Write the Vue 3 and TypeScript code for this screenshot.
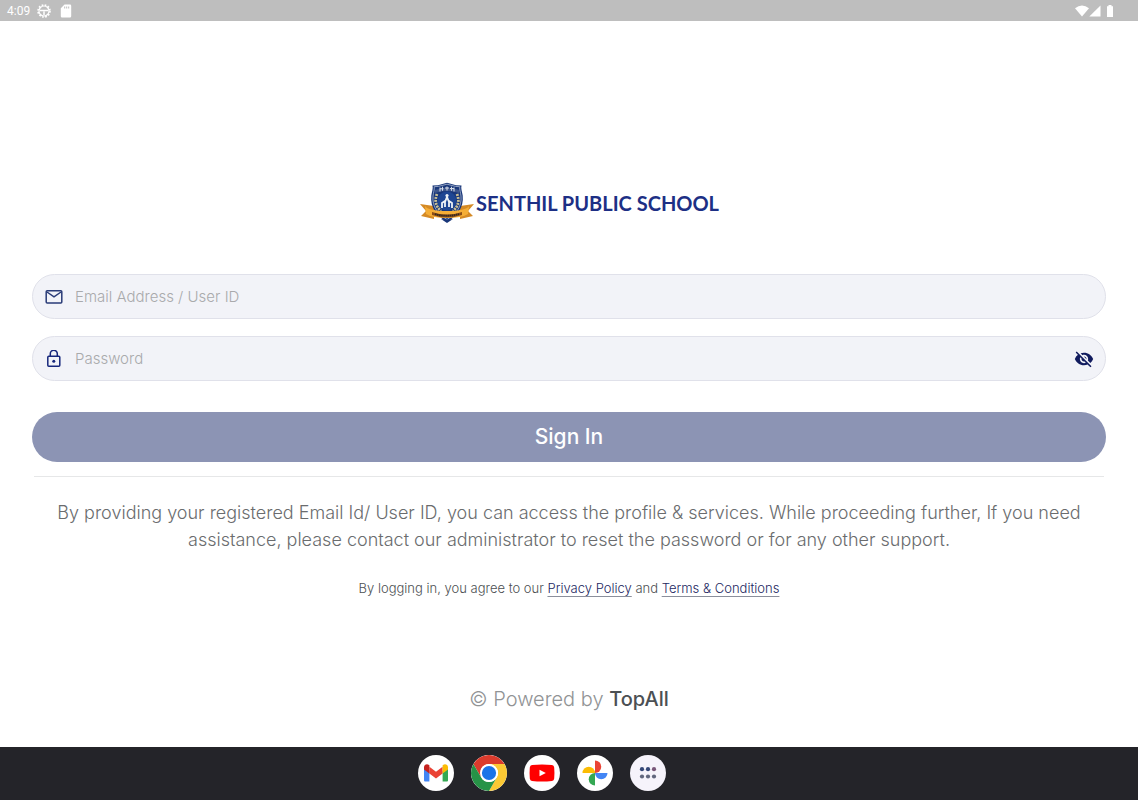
<script setup lang="ts">
import { computed, ref } from 'vue'

const userId = ref('')
const password = ref('')
const showPassword = ref(false)
const passwordType = computed(() => (showPassword.value ? 'text' : 'password'))
</script>

<template>
  <div class="screen">
    <header class="status-bar">
      <div class="status-left">
        <span class="clock">4:09</span>
        <svg width="14" height="14" viewBox="0 0 14 14" fill="none" stroke="#fff">
          <circle cx="7" cy="7" r="6" stroke-width="1.6" stroke-dasharray="1.7 1.44" />
          <circle cx="7" cy="7" r="5" stroke-width="1.2" />
          <path d="M3 6.500h8M7 7.500v3.500" stroke-width="1.500" />
        </svg>
        <svg class="sd-card" width="12" height="14" viewBox="0 0 12 14">
          <path d="M4.500.5H10a1.200 1.200 0 0 1 1.200 1.200v10.600A1.200 1.200 0 0 1 10 13.500H2A1.200 1.200 0 0 1 .8 12.300V4.200z" fill="#fff" />
          <path d="M4.700 2.500v2M6.700 2.500v2M8.700 2.500v2" stroke="#bebebe" />
        </svg>
      </div>
      <div class="status-right">
        <svg width="14" height="12" viewBox="0 0 14 12" fill="#fff"><path d="M0 3.200Q7-2.400 14 3.200L7 11.500z" /></svg>
        <svg width="12" height="12" viewBox="0 0 12 12" fill="#fff"><path d="M11.500.5v11H.3z" /></svg>
        <svg class="battery" width="8" height="12" viewBox="0 0 8 12" fill="#fff"><path d="M2.500 0h3v1.200H7V12H1V1.200h1.500z" /></svg>
      </div>
    </header>

    <main class="content">
      <h1 class="brand">
        <svg width="56" height="42" viewBox="0 0 56 42" aria-hidden="true">
          <path d="M1 22 15 24v13L2 34l5-5zM55 22 41 24v13l13-3-5-5z" fill="#d58a25" />
          <path d="M28 .8 37 3.200l5.500.3c-.8 3 .6 6 1.200 10C45 26 38 34 28 40 18 34 11 26 12.300 13.500c.6-4 2-7 1.200-10l5.500-.3z" fill="#183679" />
          <path d="M28 2.200 36.500 4.400l4.300.3c-.4 3 .8 6 1.200 9.300C43 25 37 32 28 37.500 19 32 13 25 14 14c.4-3.300 1.600-6.300 1.200-9.300l4.300-.3z" fill="none" stroke="#aebbd3" stroke-width=".8" />
          <path d="M16 8q12-5 24 0v3q-12-4-24 0z" fill="#3e568c" />
          <path d="M21 5.500v4M23.500 4.800v4M21.500 6.800h3M28 4.500v4M26 6h4M32.500 4.800v4M31 6.500h4.500M35 5.500v4" stroke="#d3dae6" stroke-width="1.100" />
          <path d="M18 12q-4 10 4 17M38 12q4 10-4 17" fill="none" stroke="#c9bf95" stroke-width="2.800" stroke-dasharray="2 1" />
          <circle cx="28" cy="19" r="9.500" fill="#1e4693" />
          <path d="M23 26v-5l3-2v6M33 26v-5l-3-2v6M26 20l2-5 2 5" fill="none" stroke="#eef2f6" stroke-width="1.800" />
          <circle cx="28" cy="13.500" r="1.600" fill="#eef2f6" />
          <path d="M6 24q3 5 22 5t22-5l-1 8q-6 4-21 4T7 32z" fill="#f5ae37" />
          <path d="M13 30q15 5 30 0v3q-15 5-30 0z" fill="#8b4e18" />
          <path d="M16 32q12 3.500 24 0" fill="none" stroke="#342920" stroke-width="1.800" stroke-dasharray="1.500 .6" />
          <path d="m22 37 6 4 6-4q-6 1-12 0z" fill="#183679" />
        </svg>
        <span>SENTHIL PUBLIC SCHOOL</span>
      </h1>

      <form class="login" @submit.prevent>
        <div class="field">
          <svg width="18" height="18" viewBox="0 0 18 18" fill="none" stroke="#293b77" stroke-width="1.500" aria-hidden="true">
            <rect x="1.200" y="2.700" width="15.600" height="12.300" rx="1" />
            <path d="m2 4 7 4.800L16 4" />
          </svg>
          <input v-model="userId" type="text" aria-label="Email Address / User ID" placeholder="Email Address / User ID" autocomplete="username">
        </div>
        <div class="field">
          <svg width="18" height="18" viewBox="0 0 18 18" fill="none" stroke="#16277c" stroke-width="1.500" aria-hidden="true">
            <rect x="2.800" y="6.300" width="12" height="10" rx="1" />
            <path d="M5.300 6V3.800a3.500 3.500 0 0 1 7 0V6" />
            <circle cx="8.800" cy="11.300" r="1.500" fill="#16277c" stroke="none" />
          </svg>
          <input v-model="password" :type="passwordType" aria-label="Password" placeholder="Password" autocomplete="current-password">
          <button class="reveal" type="button" aria-label="Show or hide password" @click="showPassword = !showPassword">
            <svg width="20" height="20" viewBox="0 0 24 24" fill="#111b5e">
              <path d="M12 7c2.760 0 5 2.240 5 5 0 .65-.13 1.260-.36 1.830l2.920 2.920c1.510-1.260 2.700-2.890 3.430-4.750-1.730-4.390-6-7.500-11-7.500-1.400 0-2.740.25-3.980.7l2.160 2.160C10.740 7.130 11.350 7 12 7zM2 4.270l2.280 2.280.46.46A11.800 11.800 0 0 0 1 12c1.730 4.390 6 7.500 11 7.500 1.550 0 3.030-.3 4.380-.84l.42.42L19.730 22 21 20.730 3.270 3zM7.530 9.800l1.550 1.550c-.05.21-.08.43-.08.65 0 1.660 1.340 3 3 3 .22 0 .44-.03.65-.08l1.550 1.550c-.67.33-1.410.53-2.200.53-2.760 0-5-2.240-5-5 0-.79.2-1.530.53-2.200zm4.310-.78 3.150 3.150.02-.16c0-1.660-1.340-3-3-3z" />
            </svg>
          </button>
        </div>
        <button class="sign-in" type="submit">Sign In</button>
      </form>

      <hr class="divider">
      <p class="help">By providing your registered Email Id/ User ID, you can access the profile &amp; services. While proceeding further, If you need assistance, please contact our administrator to reset the password or for any other support.</p>
      <p class="terms">By logging in, you agree to our <a href="#privacy">Privacy Policy</a> and <a href="#terms">Terms &amp; Conditions</a></p>
      <footer class="powered">© Powered by <strong>TopAll</strong></footer>
    </main>

    <nav class="dock" aria-label="Apps">
      <button type="button" aria-label="Gmail">
        <svg viewBox="0 0 36 36">
          <path d="M6 12v13.200c0 .8.600 1.300 1.300 1.300h4.100V16z" fill="#4285f4" />
          <path d="M24.600 16v10.500h4.100c.8 0 1.300-.6 1.300-1.300V12z" fill="#34a853" />
          <path d="m11.400 18.500 6.600 5 6.600-5v-6.700L18 16.800l-6.600-5z" fill="#ea4335" />
          <path d="M6 12.500c0-3 3-4 5-2.500l.4.300v8.200L6 14.500z" fill="#c5221f" />
          <path d="M30 12.500c0-3-3-4-5-2.500l-.4.300v8.200l5.400-4z" fill="#fbbc04" />
        </svg>
      </button>
      <button type="button" aria-label="Chrome">
        <svg viewBox="0 0 36 36">
          <path d="M2.400 9A18 18 0 0 1 33.600 9H18a9 9 0 0 0-7.800 4.500v9z" fill="#db3b2d" />
          <path d="M33.600 9A18 18 0 0 1 18 36l7.800-13.500A9 9 0 0 0 18 9z" fill="#fcc934" />
          <path d="M18 36A18 18 0 0 1 2.400 9l7.800 13.500A9 9 0 0 0 25.800 22.500z" fill="#279347" />
          <circle cx="18" cy="18" r="9" fill="#fff" />
          <circle cx="18" cy="18" r="7.100" fill="#1a73e8" />
        </svg>
      </button>
      <button type="button" aria-label="YouTube">
        <svg viewBox="0 0 36 36">
          <path d="M8 10q10-1 20 0 2 .3 2.200 2.500.5 5.500 0 11Q30 25.800 28 26q-10 1-20 0-2-.2-2.200-2.500-.5-5.500 0-11Q6 10.300 8 10z" fill="#f00" />
          <path d="m15.500 14.800 6.300 3.200-6.300 3.200z" fill="#fff" />
        </svg>
      </button>
      <button type="button" aria-label="Photos">
        <svg viewBox="0 0 36 36">
          <path d="M18 5.500a6.200 6.200 0 0 1 0 12.500z" fill="#ea4335" />
          <path d="M5.500 18A6.200 6.200 0 0 1 18 18z" fill="#fbbc04" />
          <path d="M18 30.500A6.200 6.200 0 0 1 18 18z" fill="#34a853" />
          <path d="M30.500 18A6.200 6.200 0 0 1 18 18z" fill="#4285f4" />
        </svg>
      </button>
      <button type="button" class="all-apps" aria-label="All apps">
        <svg viewBox="0 0 36 36">
          <g fill="#354777"><circle cx="12" cy="14.200" r="2.100" /><circle cx="18" cy="14.200" r="2.100" /></g>
          <circle cx="24" cy="14.200" r="2.100" fill="#795779" />
          <g fill="#62677e"><circle cx="12" cy="21.500" r="2.100" /><circle cx="18" cy="21.500" r="2.100" /><circle cx="24" cy="21.500" r="2.100" /></g>
        </svg>
      </button>
    </nav>
  </div>
</template>

<style>
body {
  margin: 0;
}
</style>

<style scoped>
.screen {
  min-height: 100vh;
  display: flex;
  flex-direction: column;
  background: #fff;
  font-family: Inter, "Open Sans", sans-serif;
  font-weight: 300;
}

.screen *,
.screen {
  box-sizing: border-box;
}

svg {
  display: block;
  flex: none;
}

.status-bar {
  height: 21px;
  padding: 0 24px 0 7px;
  display: flex;
  justify-content: space-between;
  align-items: center;
  background: #bebebe;
  color: #fff;
}

.status-left,
.status-right {
  display: flex;
  align-items: center;
}

.status-left {
  gap: 7px;
}

.sd-card {
  margin-left: 2px;
}

.status-right {
  gap: 0;
}

.battery {
  margin-left: 5px;
}

.clock {
  font: 400 12px/20px Roboto, sans-serif;
}

.content {
  flex: 1;
  padding: 161px 32px 32px;
  display: flex;
  flex-direction: column;
}

.brand {
  margin: 0;
  display: flex;
  justify-content: center;
  align-items: center;
  gap: 1px;
  color: #1d2f85;
  font: 700 20px/42px Lato, sans-serif;
}

.login {
  margin-top: 50px;
  display: flex;
  flex-direction: column;
}

.field {
  height: 45px;
  margin-bottom: 17px;
  padding: 0 11px 0 12px;
  display: flex;
  align-items: center;
  gap: 12px;
  border: 1px solid #e0e1ea;
  border-radius: 23px;
  background: #f2f3f8;
}

input {
  flex: 1;
  min-width: 0;
  height: 40px;
  padding: 0;
  border: 0;
  outline: 0;
  background: transparent;
  color: #333;
  font: inherit;
  font-size: 15px;
}

input::placeholder {
  color: #a9aaac;
  opacity: 1;
}

button {
  padding: 0;
  border: 0;
  cursor: pointer;
}

.reveal {
  background: transparent;
}

.sign-in {
  height: 50px;
  margin-top: 14px;
  border-radius: 25px;
  background: #8c94b4;
  color: #fff;
  font: 500 21px/50px Inter, sans-serif;
}

.divider {
  width: calc(100% - 4px);
  margin: 14px auto 0;
  border: 0;
  border-top: 1px solid #e6e7e8;
}

.help {
  margin: 22px 16px 0;
  color: #6a6c6e;
  font-size: 18px;
  line-height: 27px;
  text-align: center;
}

.terms {
  margin: 25px 0 0;
  color: #4c4f52;
  font-size: 13px;
  line-height: 20px;
  text-align: center;
}

.terms a {
  color: #1c275f;
  text-decoration-color: #8b8f9c;
  text-underline-offset: 3px;
}

.powered {
  margin-top: 86px;
  color: #919395;
  font-size: 20px;
  line-height: 30px;
  text-align: center;
}

.powered strong {
  color: #4c5054;
  font-weight: 500;
}

.dock {
  height: 53px;
  padding: 0 54px 1px 0;
  display: flex;
  justify-content: center;
  align-items: center;
  gap: 17px;
  background: #242429;
}

.dock button {
  width: 36px;
  height: 36px;
  border-radius: 50%;
  overflow: hidden;
  background: #fff;
}

.dock .all-apps {
  background: #f6f3fb;
}
</style>
